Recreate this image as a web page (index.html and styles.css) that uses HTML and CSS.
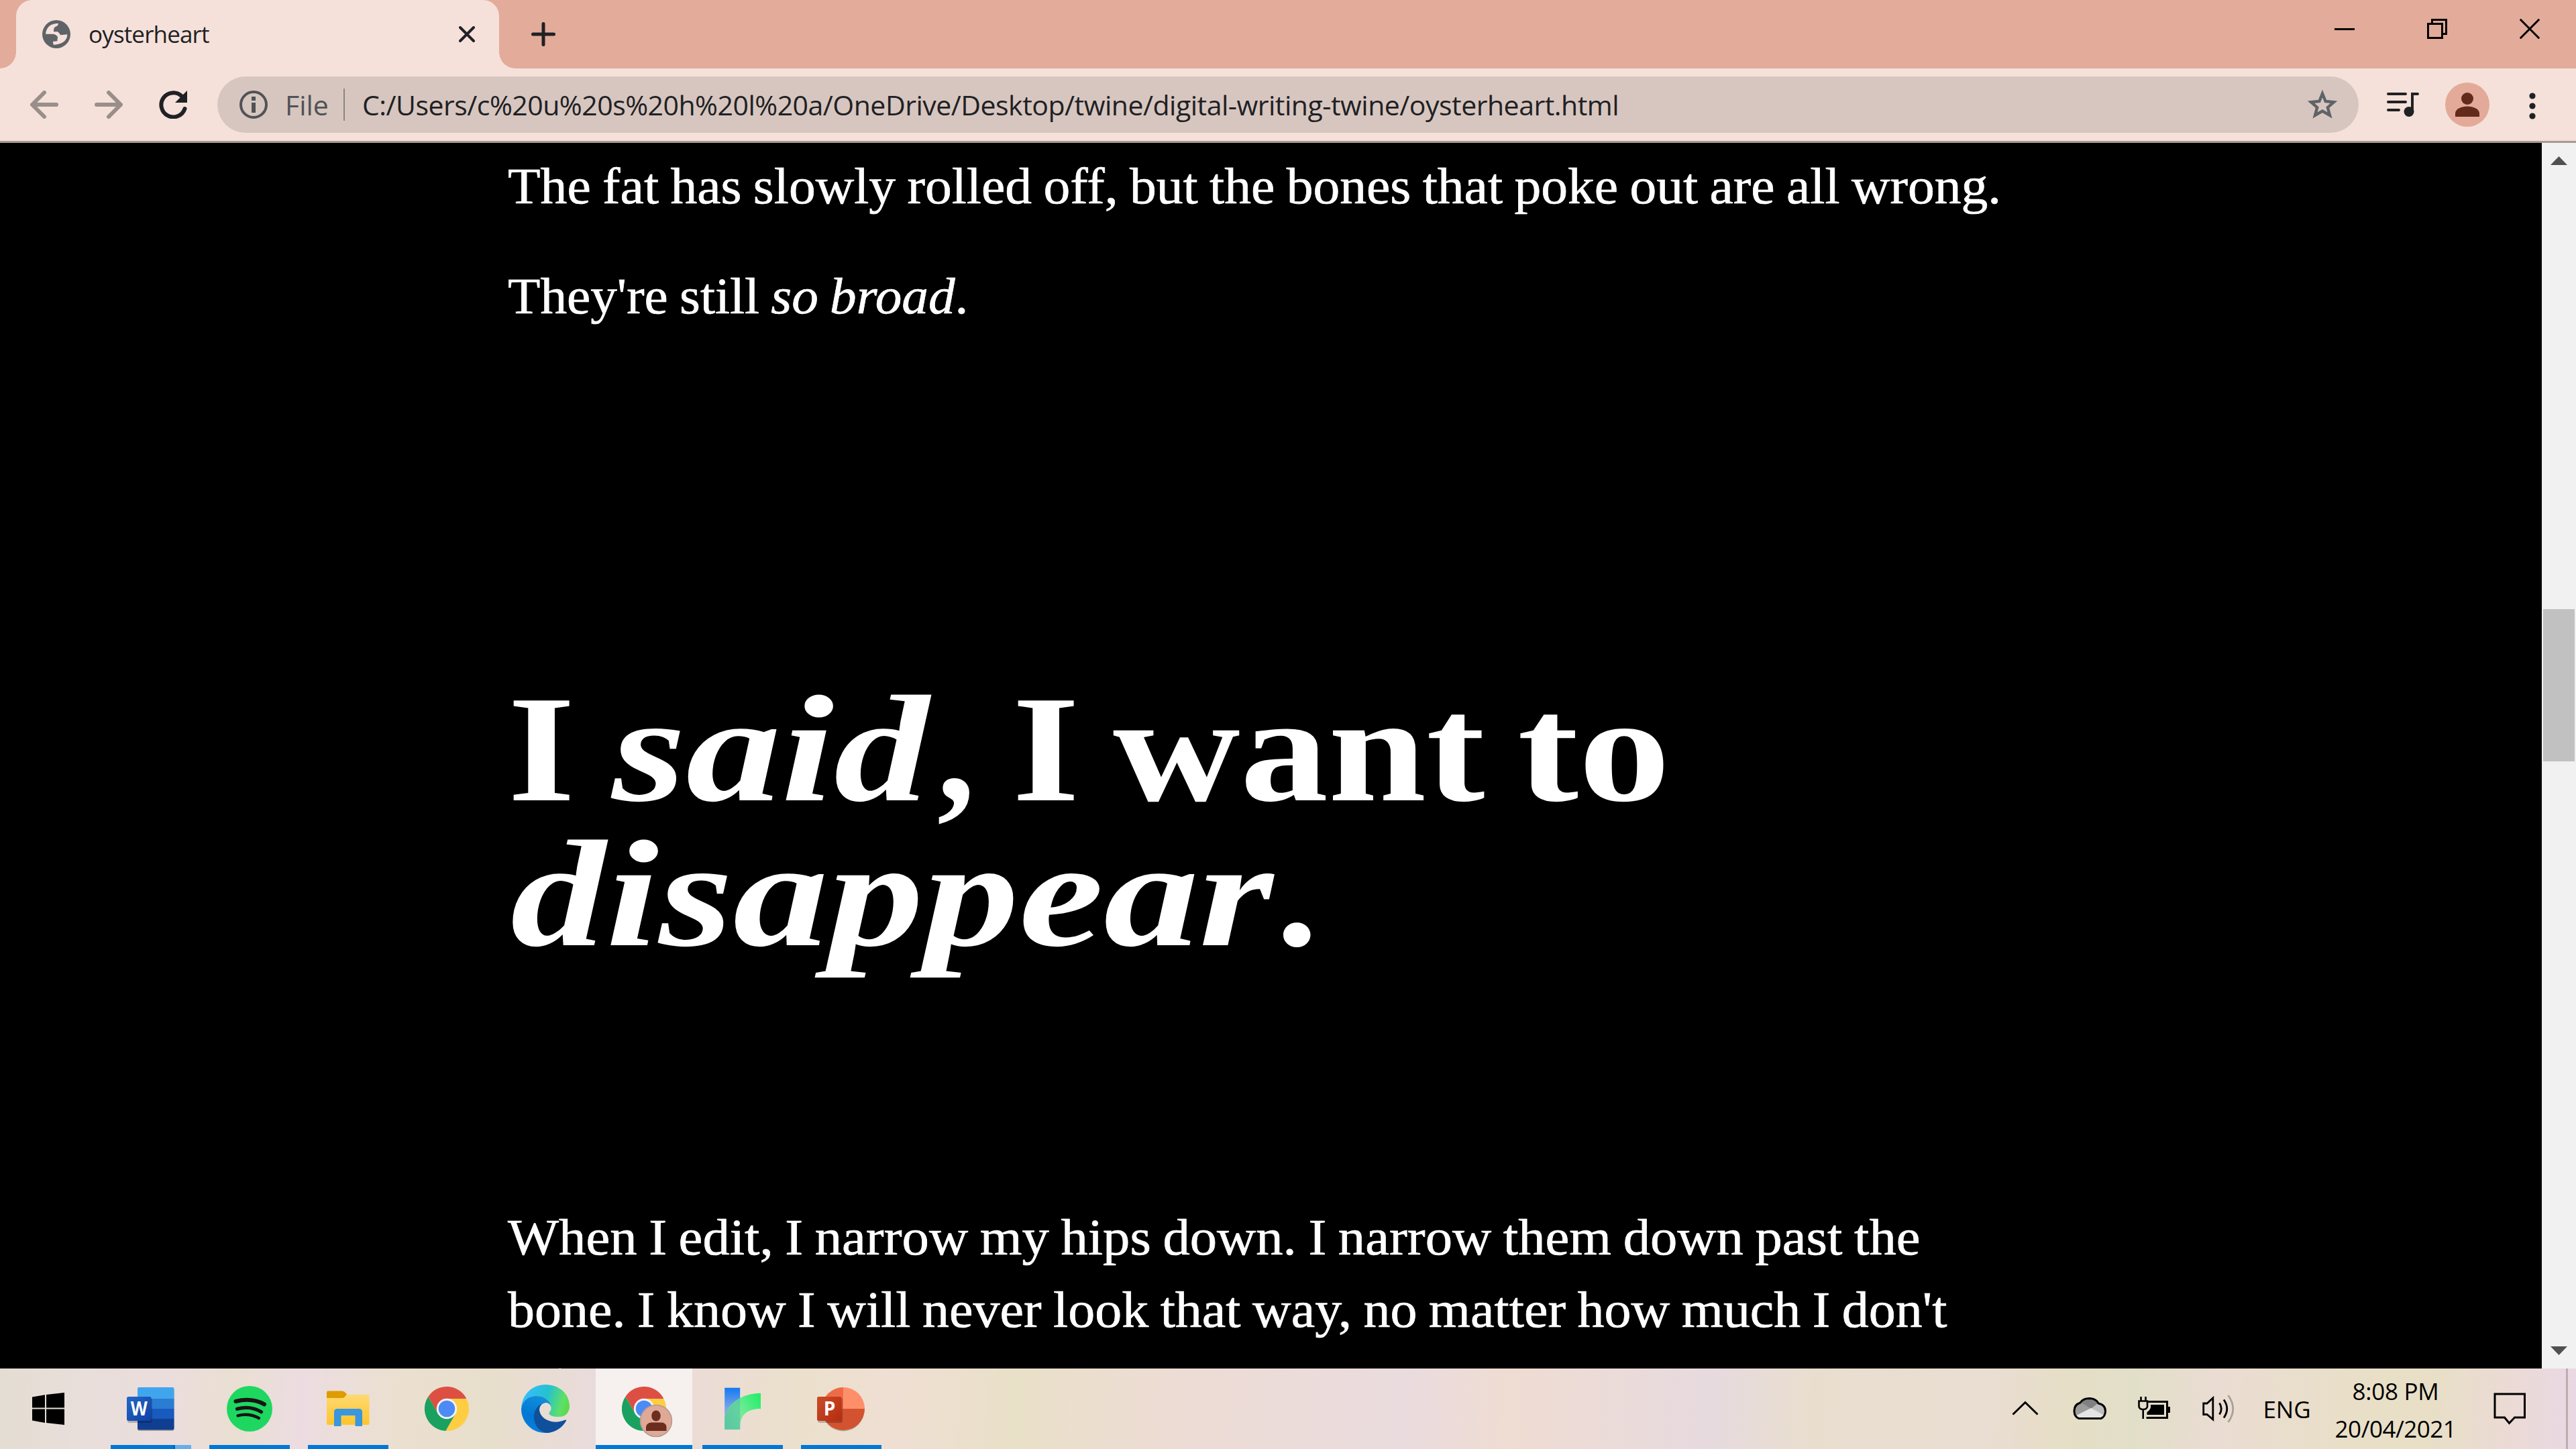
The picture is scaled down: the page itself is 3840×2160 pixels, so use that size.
FILE: index.html
```html
<!DOCTYPE html>
<html lang="en">
<head>
<meta charset="utf-8">
<title>oysterheart</title>
<link rel="stylesheet" href="styles.css">
</head>
<body>
<div class="screen">
  <header class="titlebar">
    <div class="tab">
      <svg class="favicon" viewBox="189 90 126 126"><circle cx="252" cy="153" r="63" fill="#5f6368"/><path fill="#f5e1da" d="M204 152Q208 106 260 104Q262 112 252 118Q238 122 240 142L258 142Q266 148 270 157L301 154Q300 196 240 201L236 186L256 184L258 164Q248 152 236 152Z"/></svg>
      <span class="tab-title">oysterheart</span>
      <svg class="tab-close" viewBox="0 0 24 24"><path d="M2 2L22 22M22 2L2 22" stroke="#202124" stroke-width="4" stroke-linecap="round"/></svg>
    </div>
    <svg class="new-tab" viewBox="0 0 36 36"><path d="M18 2.500V33.500M2.500 18H33.500" stroke="#202124" stroke-width="5" stroke-linecap="round"/></svg>
    <div class="window-buttons">
      <span class="window-button"><svg viewBox="0 0 30 30"><path d="M0 15.500H30" stroke="#000" stroke-width="3"/></svg></span>
      <span class="window-button"><svg viewBox="0 0 30 30"><path d="M7.500 7V1.500H28.500V22.500H23M1.500 7.500H22.500V28.500H1.500Z" fill="none" stroke="#000" stroke-width="3"/></svg></span>
      <span class="window-button"><svg viewBox="0 0 30 30"><path d="M.7.700L29.300 29.300M29.300.7L.7 29.300" stroke="#000" stroke-width="3"/></svg></span>
    </div>
  </header>

  <nav class="toolbar">
    <svg class="nav-icon" viewBox="0 0 42 42"><path d="M39 21H4M21 3L3 21L21 39" fill="none" stroke="#998e8a" stroke-width="6" stroke-linecap="round" stroke-linejoin="round"/></svg>
    <svg class="nav-icon" viewBox="0 0 42 42"><path d="M3 21H38M21 3L39 21L21 39" fill="none" stroke="#998e8a" stroke-width="6" stroke-linecap="round" stroke-linejoin="round"/></svg>
    <svg class="nav-icon" viewBox="0 0 42 42"><path d="M38.500 27A18 18 0 1 1 34 8.500" fill="none" stroke="#202124" stroke-width="6" stroke-linecap="round"/><path d="M42 0V18H24Z" fill="#202124"/></svg>
    <div class="omnibox">
      <svg class="info" viewBox="0 0 42 42"><circle cx="21" cy="21" r="19" fill="none" stroke="#505356" stroke-width="4"/><path d="M18 9H24V15H18ZM18 18H24V33H18Z" fill="#505356"/></svg>
      <span class="scheme">File</span>
      <span class="separator"></span>
      <span class="url">C:/Users/c%20u%20s%20h%20l%20a/OneDrive/Desktop/twine/digital-writing-twine/oysterheart.html</span>
      <svg class="star" viewBox="0 0 44 44"><path d="M22 5.500L26.600 17L39 18.200L29.800 26.200L33 38L22 31.600L11 38L14.200 26.200L5 18.200L17.400 17Z" fill="none" stroke="#5f6368" stroke-width="4.400"/></svg>
    </div>
    <svg class="media" viewBox="0 0 48 36"><path d="M2 2H28M2 14H28M2 26H18" stroke="#202124" stroke-width="4" stroke-linecap="round"/><path d="M38 28V2H46" fill="none" stroke="#202124" stroke-width="4" stroke-linecap="round"/><circle cx="33" cy="28.500" r="7.500" fill="#202124"/></svg>
    <svg class="profile" viewBox="0 0 66 66"><circle cx="33" cy="33" r="33" fill="#e3aa99"/><circle cx="33" cy="24" r="9" fill="#622a1a"/><path d="M15 51V46C15 39 25 35.500 33 35.500S51 39 51 46V51Z" fill="#622a1a"/></svg>
    <svg class="menu" viewBox="0 0 10 40"><circle cx="5" cy="5" r="4.600"/><circle cx="5" cy="20" r="4.600"/><circle cx="5" cy="35" r="4.600"/></svg>
  </nav>

  <main class="viewport">
    <article class="passage">
      <p class="para para-first">The fat has slowly rolled off, but the bones that poke out are all wrong.</p>
      <p class="para para-second">They're still <em>so broad</em>.</p>
      <h1 class="heading">
        <span class="heading-line"><span class="word word-i">I</span><em class="word word-said">said</em><span class="word word-comma">,</span><span class="word word-i2">I</span><span class="word word-want">want</span><span class="word word-to">to</span></span>
        <span class="heading-line"><em class="word word-disappear">disappear</em><span class="word word-stop">.</span></span>
      </h1>
      <p class="para para-last"><span class="line line-when">When I edit, I narrow my hips down. I narrow them down past the</span> <span class="line line-bone">bone. I know I will never look that way, no matter how much I don't</span> <span class="line line-eat">eat.</span></p>
    </article>
    <div class="scrollbar">
      <svg class="arrow" viewBox="0 0 25 13"><path d="M0 13L12.500 0L25 13Z" fill="#505050"/></svg>
      <span class="thumb"></span>
      <svg class="arrow" viewBox="0 0 25 13"><path d="M0 0L12.500 13L25 0Z" fill="#505050"/></svg>
    </div>
  </main>

  <footer class="taskbar">
    <svg class="start" viewBox="0 0 144 120"><path d="M48 42.500L67 39.300V58.500H48ZM69 39L96 36V58.500H69ZM48 60.500H67V81L48 77.500ZM69 60.500H96V84L69 81Z"/></svg>
    <div class="apps">
      <div class="app running grouped">
        <svg viewBox="0 0 144 120">
          <defs><linearGradient id="word-tile" x2="1" y2="1"><stop stop-color="#2368c4"/><stop offset="1" stop-color="#0f40a6"/></linearGradient><clipPath id="word-page"><rect x="52" y="28" width="54.500" height="63.500" rx="2.500"/></clipPath></defs>
          <rect x="52" y="30" width="54.500" height="63" rx="3" fill="#00000040"/>
          <g clip-path="url(#word-page)"><path d="M52 28H107V45H52Z" fill="#41a5ee"/><path d="M52 45H107V60H52Z" fill="#2b7cd3"/><path d="M52 60H107V75H52Z" fill="#185abd"/><path d="M52 75H107V92H52Z" fill="#103f91"/></g>
          <rect x="37" y="44" width="37" height="37" rx="3" fill="#00000038"/>
          <rect x="36" y="42" width="36.500" height="36" rx="2.500" fill="url(#word-tile)"/>
          <text class="office-letter" x="54.200" y="70" text-anchor="middle" textLength="25" lengthAdjust="spacingAndGlyphs">W</text>
        </svg>
      </div>
      <div class="app running">
        <svg viewBox="0 0 144 120"><circle cx="72" cy="60" r="34" fill="#1ed760"/><g fill="none" stroke="#191414" stroke-linecap="round"><path d="M51.500 49Q75 43 94 53.300" stroke-width="6"/><path d="M53.500 60.300Q73 55 89.500 64.700" stroke-width="5.200"/><path d="M54.500 70.300Q71 66 86 74" stroke-width="4.400"/></g></svg>
      </div>
      <div class="app running">
        <svg viewBox="0 0 144 120">
          <defs><linearGradient id="folder" x2="0" y2="1"><stop stop-color="#ffd971"/><stop offset="1" stop-color="#fdc52c"/></linearGradient></defs>
          <path d="M40 44V35.500Q40 33.500 42 33.500H63Q66 33.500 68 36L71 39.500L67 48H40Z" fill="#dd9c00"/>
          <path d="M40 44H64Q66 44 68 41L69.500 39H102Q103.500 39 103.500 41V82Q103.500 84 101.500 84H42Q40 84 40 82Z" fill="url(#folder)"/>
          <path d="M51 86V65Q51 60 56 60H88Q93 60 93 65V86H82.500V70H61.500V86Z" fill="#3a96dd"/>
        </svg>
      </div>
      <div class="app">
        <svg viewBox="0 0 144 120"><g id="chrome-logo" transform="translate(72 60)"><path d="M-27.700-18A33 33 0 0 1 29.400-15H0L-13 7.500Z" fill="#dd4f43"/><path d="M29.400-15A33 33 0 0 1-1.700 33L13 7.500L0-15Z" fill="#ffcd41"/><path d="M-1.700 33A33 33 0 0 1-27.700-18L-13 7.500L13 7.500Z" fill="#1aa15f"/><circle r="15.200" fill="#f3f3f3"/><circle r="12.300" fill="#4c8bf5"/></g></svg>
      </div>
      <div class="app">
        <svg viewBox="0 0 144 120">
          <defs><linearGradient id="edge-top" x1="0" y1=".4" x2="1" y2=".6"><stop stop-color="#37bdff"/><stop offset=".5" stop-color="#26c1cf"/><stop offset=".85" stop-color="#5fe066"/><stop offset="1" stop-color="#5cd94f"/></linearGradient><linearGradient id="edge-blue" x1=".6" x2=".2" y2="1"><stop stop-color="#1590dc"/><stop offset=".6" stop-color="#0078d4"/><stop offset="1" stop-color="#0a80dd"/></linearGradient></defs>
          <path d="M36 60C37 38 53 24 72 24C93 24 108 38 108 56C108 67 100 73 91 72C84 72 77 70 77.500 66C79 64 81 62 80.500 58C79 48 68 41 58 41C47 41 38 49 36 60Z" fill="url(#edge-top)"/>
          <path d="M36 60C38 47 48 41 58 41C69 41 78 47 80.500 56C78 52 75 51 72 51C66 52 63 57 63 62C64 72 74 80 85 80C92 80 98 78 102.500 76.500C98 88 86 96 72 96C52 96 36 80 36 60Z" fill="url(#edge-blue)"/>
          <path d="M72 51C60 53 54 64 55 74C56 86 64 95 75 96C88 95 98 87 103 78C103.500 76 101 77 98 78C90 81 80 80 73 76C66 72 63 66 63 61C63 56 67 51 72 51Z" fill="#10509a"/>
        </svg>
      </div>
      <div class="app active">
        <svg viewBox="0 0 144 120"><use href="#chrome-logo"/><circle cx="90" cy="78" r="23.500" fill="#e0a897" stroke="#b09a92" stroke-width="1.500"/><ellipse cx="90" cy="70.500" rx="6.800" ry="8" fill="#6b2d1d"/><path d="M75 93V87Q76 81 83 80.500H98Q105 81 105.500 87V93Z" fill="#6b2d1d"/></svg>
      </div>
      <div class="app running">
        <svg viewBox="0 0 144 120">
          <defs><linearGradient id="r-bar" x2="0" y2="1"><stop stop-color="#137af2"/><stop offset=".5" stop-color="#7fa5e6"/><stop offset="1" stop-color="#9cc8c0"/></linearGradient><linearGradient id="r-arm" x1="0" y1=".8" x2="1" y2=".2"><stop stop-color="#5ad79a"/><stop offset=".45" stop-color="#6aec92"/><stop offset="1" stop-color="#12f060"/></linearGradient></defs>
          <path d="M45.200 28.700H68.200V91H45.200Z" fill="url(#r-bar)"/>
          <path d="M45.200 91V75C48 52 70 37.500 99 36.700V60C79 60 68.200 69 68.200 87V91Z" fill="url(#r-arm)" fill-opacity=".9"/>
          <path d="M45.200 75C48 61 56 51 68.200 44V91H45.200Z" fill="#55b3a8" fill-opacity=".35"/>
        </svg>
      </div>
      <div class="app running">
        <svg viewBox="0 0 144 120">
          <defs><linearGradient id="ppt-tile" x2="1" y2="1"><stop stop-color="#ca4c28"/><stop offset="1" stop-color="#b62b10"/></linearGradient></defs>
          <circle cx="75" cy="62" r="31.500" fill="#00000040"/>
          <path d="M75 28V60H43A32 32 0 0 1 75 28Z" fill="#ed6c47"/><path d="M75 28A32 32 0 0 1 107 60H75Z" fill="#ff8f6b"/><path d="M43 60H107A32 32 0 0 1 43 60Z" fill="#d35230"/>
          <rect x="37" y="44" width="37" height="37" rx="3" fill="#00000038"/>
          <rect x="36" y="42" width="36.500" height="36" rx="2.500" fill="url(#ppt-tile)"/>
          <text class="office-letter" x="54.500" y="70" text-anchor="middle">P</text>
        </svg>
      </div>
    </div>
    <div class="tray">
      <svg class="tray-icon" viewBox="0 0 96 120"><path d="M29.500 68.500L48 50.500L66.500 68.500" fill="none" stroke="#000" stroke-width="3"/></svg>
      <svg class="tray-icon" viewBox="0 0 96 120"><defs><clipPath id="cloud"><path d="M32 74.500Q25 72 25 63Q25 54 34 51Q38 44.500 48 44.500Q58 45 61 52Q71.500 54 71.500 64Q71 72 65 74.500Z"/></clipPath></defs><g clip-path="url(#cloud)"><path d="M20 40H76V80H20Z" fill="#808080"/><path d="M20 48L36 51L50 60L28 80H20Z" fill="#9b9b9b"/><path d="M50 60L60 52L76 55V76Z" fill="#bdbdbd"/><path d="M28 70L50 59L70 70L66 80H30Z" fill="#e4e4e4"/></g><path d="M32 74.500Q25 72 25 63Q25 54 34 51Q38 44.500 48 44.500Q58 45 61 52Q71.500 54 71.500 64Q71 72 65 74.500Z" fill="none" stroke="#000" stroke-width="3"/></svg>
      <svg class="tray-icon" viewBox="0 0 96 120"><path d="M39 49.500H67.500V73.500H36.500" fill="none" stroke="#000" stroke-width="3"/><path d="M68 57H72V66H68ZM43 54H63V69H37.500V65Q42 62 43 58Z"/><path d="M28.500 42V48M35.500 42V48M25.500 48.500H38V57Q37 61 31.700 61Q26.500 61 25.500 57ZM31.700 61V75" fill="none" stroke="#000" stroke-width="2.600"/></svg>
      <svg class="tray-icon" viewBox="0 0 96 120"><g fill="none" stroke="#000" stroke-width="2.800"><path d="M25.700 52H31L39.800 44V76L31 68.500H25.700Z"/><path d="M49.500 51.500Q55 60 49.500 68.500M56 46.500Q65.500 60 56 73.500"/><path d="M62.500 40Q77 60 62.500 80" stroke="#aaa294"/></g></svg>
      <span class="language">ENG</span>
      <div class="clock"><span class="time">8:08 PM</span><span class="date">20/04/2021</span></div>
      <svg class="notifications" viewBox="0 0 124 120"><path d="M40 38H84.500V73H69.500L61.500 81.500L54.500 73H40Z" fill="none" stroke="#000" stroke-width="3"/></svg>
      <span class="show-desktop"></span>
    </div>
  </footer>
</div>
</body>
</html>
```
FILE: styles.css
```css
* { box-sizing: border-box; }
body { margin: 0; background: #000; }
svg { display: block; flex: none; }
.screen { width: 3840px; height: 2160px; display: flex; flex-direction: column; overflow: hidden; font-family: "Open Sans", "Noto Sans", sans-serif; color: #202124; }

/* Tab strip */
.titlebar { height: 102px; flex: none; display: flex; align-items: center; background: #e3ab9a; padding-left: 24px; }
.tab { position: relative; width: 720px; height: 102px; flex: none; display: flex; align-items: center; padding: 0 36px 0 39px; background: #f5e1da; border-radius: 24px 24px 0 0; }
.tab::before, .tab::after { content: ""; position: absolute; bottom: 0; width: 24px; height: 24px; }
.tab::before { left: -24px; background: radial-gradient(circle at 0 0, #e3ab9a 23.500px, #f5e1da 24px); }
.tab::after { right: -24px; background: radial-gradient(circle at 100% 0, #e3ab9a 23.500px, #f5e1da 24px); }
.favicon { width: 42px; height: 42px; }
.tab-title { margin: -1px auto 0 27px; font-size: 35px; line-height: 48px; letter-spacing: -.85px; }
.tab-close { width: 24px; height: 24px; }
.new-tab { width: 36px; height: 36px; margin-left: 48px; }
.window-buttons { margin-left: auto; display: flex; align-self: flex-start; }
.window-button { width: 138px; height: 86px; display: flex; align-items: center; justify-content: center; }
.window-button svg { width: 30px; height: 30px; }

/* Address row */
.toolbar { height: 111px; flex: none; display: flex; align-items: center; padding-left: 45px; background: #f5e1da; border-bottom: 3px solid #a99a94; }
.nav-icon { width: 42px; height: 42px; margin-right: 54px; }
.omnibox { width: 3192px; height: 84px; margin-left: -9px; flex: none; display: flex; align-items: center; padding: 0 32px 0 33px; border-radius: 42px; background: #d7c6bf; }
.info { width: 42px; height: 42px; }
.scheme { margin-left: 26px; font-size: 41px; line-height: 60px; color: #505356; }
.separator { width: 2px; height: 48px; margin: 0 26px 0 22px; background: #8d8481; }
.url { font-size: 41px; line-height: 60px; letter-spacing: -.5px; white-space: nowrap; }
.star { width: 44px; height: 44px; margin-left: auto; }
.media { width: 48px; height: 36px; margin-left: 42px; }
.profile { width: 66px; height: 66px; margin-left: 39px; }
.menu { width: 10px; height: 40px; margin: 3px 0 0 59px; fill: #202124; }

/* Page content */
.viewport { height: 1827px; flex: none; display: flex; overflow: hidden; background: #000; color: #fff; }
.passage { flex: 1; padding: 10px 0 0 757px; font-family: "Liberation Serif", Georgia, serif; white-space: nowrap; }
.para { margin: 0; font-size: 76px; line-height: 108px; word-spacing: -2.400px; -webkit-text-stroke: .7px #fff; transform-origin: 0 50%; }
.para-first { transform: scaleX(1.047); }
.para-second { margin-top: 56px; transform: scaleX(1.043); }
.heading { margin: 514px 0 0; font-size: 227px; line-height: 216px; font-weight: bold; }
.heading-line { display: flex; height: 216px; }
.word { flex: none; transform-origin: 0 50%; }
.word-i { transform: scaleX(1.135); margin-right: 67px; }
.word-said { transform: scaleX(1.25); margin-right: 106px; }
.word-comma { margin-right: 55px; }
.word-i2 { transform: scaleX(1.135); margin-right: 62px; }
.word-want { transform: scaleX(1.157); margin-right: 124px; }
.word-to { transform: scaleX(1.205); }
.word-disappear { transform: scaleX(1.252); margin: 0 233px 0 4px; }
.word-stop { transform: scaleX(1.1); }
.para-last { margin-top: 349px; }
.line { display: block; transform-origin: 0 50%; }
.line-when { transform: scaleX(1.061); }
.line-bone { transform: scaleX(1.052); }
.line-eat { margin-top: -3px; }

.scrollbar { width: 51px; flex: none; display: flex; flex-direction: column; align-items: center; padding: 20px 0; background: #f1f1f1; }
.arrow { width: 25px; height: 13px; }
.thumb { width: 47px; height: 227px; margin: 662px 0 auto; flex: none; background: #c1c1c1; }

/* Taskbar */
.taskbar { height: 120px; flex: none; display: flex; color: #000; background: linear-gradient(93deg, #e4ddd2 0, #e8deda 120px, #ebdddc 260px, #eadfd2 350px, #ecdce1 450px, #ebe0cf 600px, #e8decc 740px, #e9dbdd 900px, #ebdcd6 1040px, #ebe0cc 1190px, #efdfd3 1330px, #e9e0c8 1515px, #eddcd4 1750px, #eadbde 2100px, #efdcd2 2250px, #e7dadf 2550px, #e9dece 2700px, #eaddd2 2960px, #e6dec6 3080px, #e2dfc8 3180px, #eadcd2 3300px, #e9dfc8 3500px, #e8dfc6 3620px, #ebdad6 3750px, #e9d8e4 3840px); }
.start { width: 144px; height: 120px; margin-right: 9px; }
.apps { display: flex; gap: 3px; }
.app { width: 144px; height: 120px; position: relative; }
.app svg { width: 144px; height: 120px; }
.running::after { content: ""; position: absolute; left: 12px; bottom: 0; width: 120px; height: 6px; background: #0078d7; }
.grouped::after { background: linear-gradient(90deg, #0078d7 93px, #0069bd 93px 96px, #66aeea 96px); }
.active { background: #f6f1ef; }
.active::after { content: ""; position: absolute; left: 0; bottom: 0; width: 144px; height: 6px; background: #0078d7; }
.office-letter { font: bold 28px "Open Sans", sans-serif; fill: #fff; }
.tray { margin-left: auto; display: flex; }
.tray-icon { width: 96px; height: 120px; }
.language { width: 108px; font-size: 35px; line-height: 48px; padding-top: 37px; text-align: center; }
.clock { width: 216px; display: flex; flex-direction: column; align-items: center; padding-top: 6px; font-size: 35px; line-height: 56px; letter-spacing: -.5px; }
.time { letter-spacing: -.3px; }
.notifications { width: 124px; height: 120px; }
.show-desktop { width: 3px; height: 120px; margin: 0 12px 0 22px; background: #b9afab; }
```
